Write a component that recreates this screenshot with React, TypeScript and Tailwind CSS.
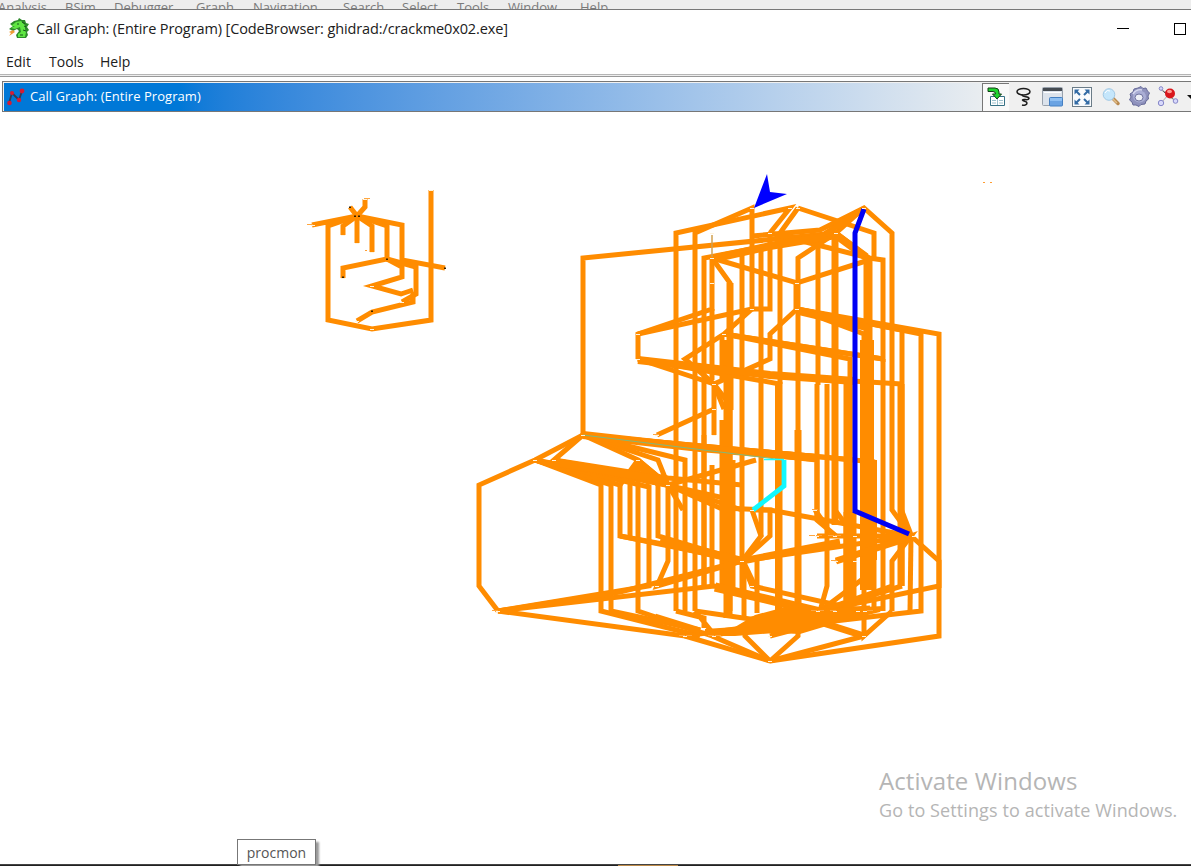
const smallGraph = [
  "M312 225L357 216L328 226V320L372 329L431 320V190",
  "M357 216L343 226V235",
  "M357 216V243",
  "M357 216L372 226V252",
  "M357 216L387 226V259L343 268V278",
  "M357 216L402 225V260L445 268",
  "M350 207L357 216L365 207V199",
  "M387 259L402 267V277L372 286L401 294L413 290",
  "M387 259L416 267V294L402 302",
  "M413 292V302L372 312L357 321",
];

const upperEdges = [
  "M583 435V258L836 233",
  "M676 611V233L790 208L770 233",
  "M695 611V233L752 208V309L638 334",
  "M704 586V258L836 233L864 208",
  "M712 258V309L638 334V359",
  "M712 258L836 233L869 258",
  "M712 258L797 283L869 260",
  "M712 258L730 283V611",
  "M770 233V309L752 309L724 334L685 359L714 384V435",
  "M798 208L780 233V384",
  "M798 208L874 233V258",
  "M752 236L820 230L864 208L892 233V510L911 536",
  "M770 233L869 258L883 260V359L724 334",
  "M798 283V258L836 233",
  "M797 309L770 334V359L714 384L730 405",
  "M797 309L864 334V611",
  "M797 309L902 330V586",
  "M797 309L921 334V611L800 625",
  "M797 309L939 334V586L820 611",
  "M638 359L714 384L724 409",
  "M638 359L780 384V611",
  "M638 359L770 376L835 380L902 384",
  "M724 334L883 359",
  "M724 334L850 359V611",
  "M742 252V590",
  "M761 245V536",
  "M722 334V380",
  "M712 309V380",
  "M657 435L714 409",
];

const lowerEdges = [
  "M583 435L535 460L479 485V586L498 611",
  "M583 435L554 460L668 485",
  "M583 435L638 460L668 485V561L657 586L742 561",
  "M583 435L658 460L668 485",
  "M583 435L685 460V611",
  "M583 435L855 460",
  "M583 435L817 460V520",
  "M583 435L875 462",
  "M535 460L601 485V611L700 636",
  "M535 460L611 485V611L700 630",
  "M535 460L620 485V536L742 561",
  "M535 460L649 487V586L498 611",
  "M535 460L668 485L742 510",
  "M554 460L668 478L742 485",
  "M554 460L733 500",
  "M638 460L630 485V536",
  "M638 460V611L712 636L770 661",
  "M638 460L658 485V536L742 561",
  "M638 460L620 485M638 460L649 485M638 460L668 485",
  "M668 485L683 510",
  "M668 485L756 460",
  "M668 485L720 508L770 510L911 536",
  "M704 435V586M712 465V586M722 420V586",
  "M498 611L714 586L820 611",
  "M498 611L620 592L742 561L911 536",
  "M498 611L685 636L864 611",
  "M742 561L668 545L620 536",
  "M742 561L752 586L864 611",
  "M742 561L770 536V510L752 510L761 536L742 561",
  "M744 561V616",
  "M757 561V613",
  "M836 561L911 536L892 561V611",
  "M817 536L911 536L939 561V636L770 661",
  "M911 536L910 611",
  "M827 384V586L820 611L864 578",
  "M817 384V520L836 536",
  "M815 510L825 524M835 510L850 530",
  "M902 586L820 611",
  "M676 611L704 618V628M695 611L712 632",
  "M695 611L750 619L820 611L870 608",
  "M685 636L770 661L864 636",
  "M770 636L864 611",
  "M770 661L745 636V628",
  "M770 661L798 636V625",
  "M864 611V636L892 611",
  "M712 636L820 611L892 586",
];

const nodes = [
  [752, 208], [790, 208], [798, 208], [864, 208], [712, 233], [770, 233],
  [836, 233], [712, 258], [712, 283], [797, 283], [752, 309], [797, 309],
  [638, 334], [724, 334], [638, 359], [714, 384], [714, 409], [657, 435],
  [714, 435], [583, 435], [535, 460], [554, 460], [638, 460], [668, 485],
  [752, 510], [815, 510], [817, 536], [835, 536], [855, 536], [914, 536],
  [742, 561], [836, 561], [855, 561], [657, 586], [752, 586], [498, 611],
  [818, 611], [835, 611], [858, 611], [865, 611], [685, 636], [714, 636],
  [770, 636], [864, 636], [770, 661], [313, 225], [365, 199], [343, 235],
  [357, 243], [372, 252], [431, 190], [343, 278], [372, 286], [402, 302],
  [357, 321], [372, 329],
];

const ticks = [
  [656, 434], [812, 535], [819, 535], [831, 535], [838, 535], [815, 509],
  [834, 560], [814, 610], [821, 610], [833, 610], [870, 610], [495, 610],
  [682, 635], [689, 635], [711, 635], [718, 635], [310, 224], [367, 198],
];

const darkNodes = [[350, 207], [355, 216], [359, 216], [387, 259], [445, 268], [372, 311], [343, 277]];

function CallGraph() {
  return (
    <svg className="block h-[752px] w-full" viewBox="0 112 1191 752">
      <g fill="none" stroke="#ff8c00" strokeWidth="5" strokeLinejoin="miter">
        {smallGraph.concat(upperEdges, lowerEdges).map((d, i) => (
          <path key={i} d={d} />
        ))}
        <path d="M797 283V309" strokeWidth="7" />
        <path d="M798 309V430" />
        <path d="M798 430V620" strokeWidth="7" />
        <path d="M730 283V410" strokeWidth="7" />
        <path d="M728 340V618" strokeWidth="9" />
        <path d="M733 460V590" />
        <path d="M835 235V525" strokeWidth="7" />
        <path d="M818 236V385" />
        <path d="M868 258V400" strokeWidth="9" />
        <path d="M867 340V590" strokeWidth="14" />
        <path d="M871 460V560" strokeWidth="12" />
        <path d="M848 384V611" strokeWidth="9" />
        <path d="M850 512V600" strokeWidth="13" />
        <path d="M778.5 384V620" strokeWidth="7" />
        <path d="M901 384V586" strokeWidth="7" />
        <path d="M901 510L911 536" strokeWidth="6" />
        <path d="M883 359V611M874 540V611" />
        <path d="M797 311L869 328" strokeWidth="7" />
        <path d="M638 360L770 375L855 381" strokeWidth="8" />
        <path d="M583 435L700 448L817 458" strokeWidth="8" />
        <path d="M554 462L668 481" strokeWidth="8" />
        <path d="M712 259L770 246L836 235" strokeWidth="8" />
        <path d="M836 235L866 257" strokeWidth="8" />
        <path d="M825 234L862 210" strokeWidth="6" />
        <path d="M660 541L742 561" strokeWidth="8" />
        <path d="M715 587L820 612" strokeWidth="9" />
        <path d="M655 617L700 631" strokeWidth="7" />
        <path d="M820 622L864 636" strokeWidth="7" />
        <path d="M836 561L911 537" strokeWidth="7" />
        <path d="M742 561L840 542" strokeWidth="7" />
        <path d="M742 561L754 586" strokeWidth="7" />
      </g>
      <path d="M705 636V629L735 627L755 615L800 603L820 609L884 606L880 612L840 622L800 634L775 633L735 636Z" fill="#ff8c00" />
      <path d="M712 235V257" stroke="#d0a050" strokeWidth="1.5" />
      <path d="M583 435L784 460" fill="none" stroke="#82b878" strokeWidth="1.2" />
      <path d="M764 459.5H784" stroke="#19ffff" strokeWidth="1.5" />
      <path d="M784 460V486L753 510" fill="none" stroke="#10f8ff" strokeWidth="4.8" />
      <path d="M864 209L855 233V511L909 534" fill="none" stroke="#0000f4" strokeWidth="5" />
      <path d="M754 208L767 174L770 192L787 194Z" fill="#0000ff" />
      <g stroke="#fff4df" strokeWidth="1">
        {nodes.map(([x, y]) => (
          <path key={`${x}-${y}`} d={`M${x - 2} ${y + 0.5}h4`} />
        ))}
      </g>
      <g stroke="#ffa640" strokeWidth="1">
        {ticks.map(([x, y]) => (
          <path key={`${x}-${y}`} d={`M${x - 3} ${y + 0.5}h6`} />
        ))}
      </g>
      <g fill="#352000">
        {darkNodes.map(([x, y]) => (
          <rect key={`${x}-${y}`} x={x - 1} y={y - 0.5} width="2" height="1.5" />
        ))}
      </g>
      <path d="M983 182.5h2M990 182.5h2M365 250.5h2" stroke="#ff9d32" />
    </svg>
  );
}

function Dragon() {
  return (
    <svg className="h-[22px] w-[22px]" viewBox="0 0 22 22">
      <path d="M2 6L6 3L10 2L11 0L14 2H17L18 5L21 6L19 9L21 12L19 14L20 17L18 20H9L8 17L11 13L9 11L5 13L1 11L5 8Z" fill="#2d8a2b" />
      <path d="M3 8L8 4L13 3L17 7L17 11L18 14L17 19H10L10 16L13 14L12 9L7 11L3 10L7 8Z" fill="#5ee642" />
      <path d="M9 6h2M14 4l3 2M16 8l2 1M15 12l3 1M12 17h3" stroke="#15551c" strokeWidth="1" />
      <path d="M5 12L1 14L3 15L1 18L7 14Z" fill="#ef9c38" />
    </svg>
  );
}

function GraphIcon() {
  return (
    <svg className="h-[18px] w-[18px]" viewBox="0 0 18 18">
      <path d="M2 15L5 5L12 12L15 3" fill="none" stroke="#333a57" strokeWidth="1.8" />
      <g fill="#d51c35">
        <circle cx="2.5" cy="15" r="2.3" /><circle cx="5" cy="5" r="2.1" />
        <circle cx="12" cy="12" r="2.2" /><circle cx="15" cy="3" r="2.4" />
      </g>
    </svg>
  );
}

function Toolbar() {
  return (
    <div className="flex h-[28px] w-[209px] shrink-0 items-center bg-[#f0f0f0]">
      <div className="flex h-[28px] w-[27px] items-center justify-center border-l border-t border-[#777] bg-[#f9f9f9]">
        <svg className="h-5 w-5" viewBox="0 0 20 20">
          <path d="M4.5 9.5H18.5V18.5H4.5Z" fill="#fff" stroke="#377286" />
          <path d="M11.5 12V18M6 13.500h4M6 16h4M13 13.500h4M13 16h4" stroke="#9bc0cd" />
          <path d="M2 1H9Q13 1 13 5V7H15.500L11 12L6.500 7H9.500Q9.500 4.500 7 4.500H2Z" fill="#20d52f" stroke="#123e17" />
        </svg>
      </div>
      <div className="flex w-[29px] justify-center">
        <svg className="h-5 w-5" viewBox="0 0 20 20" fill="none" stroke="#1d1d1d" strokeWidth="1.5">
          <ellipse cx="9.500" cy="4.700" rx="6.500" ry="3.200" />
          <path d="M8 7.500C8 11 15 8.500 15 11.500C14.500 14 9 11.500 8.500 13C9 14.500 13 14 13 16C13 18 10 18.500 8 18" />
        </svg>
      </div>
      <div className="flex w-[29px] justify-center">
        <svg className="h-[20px] w-[21px]" viewBox="0 0 21 20">
          <rect x=".5" y=".5" width="20" height="18" rx="1" fill="#dce3ec" stroke="#98a1ac" />
          <path d="M1 1H20V4H1Z" fill="#454b52" />
          <path d="M2 5H19V6H2Z" fill="#fff" />
          <rect x="7.500" y="10.500" width="13" height="8.500" rx="1" fill="#6aa3e3" stroke="#4580c3" />
          <path d="M8 11H20V14H8Z" fill="#8fc0f3" />
        </svg>
      </div>
      <div className="flex w-[29px] justify-center">
        <svg className="h-[20px] w-[20px]" viewBox="0 0 20 20">
          <rect x=".5" y=".5" width="19" height="19" fill="#f9fbfd" stroke="#6b7c88" />
          <path d="M4 4L8 8M16 4L12 8M4 16L8 12M16 16L12 12" stroke="#326ba5" strokeWidth="2" />
          <path d="M2.500 2.500H7.500L2.500 7.500ZM17.500 2.500V7.500L12.500 2.500ZM2.500 17.500V12.500L7.500 17.500ZM17.500 17.500H12.500L17.500 12.500Z" fill="#326ba5" />
        </svg>
      </div>
      <div className="flex w-[29px] justify-center">
        <svg className="h-5 w-5" viewBox="0 0 20 20">
          <path d="M12 11.500L17 16.500" stroke="#b98a50" strokeWidth="3.500" strokeLinecap="round" />
          <path d="M11 11L16 16" stroke="#e3c08b" strokeWidth="1.500" />
          <circle cx="8" cy="7.500" r="5.800" fill="#c5e6fb" stroke="#a0c8e5" />
          <path d="M4 6Q6 2 9 4" fill="none" stroke="#fff" />
        </svg>
      </div>
      <div className="flex w-[29px] justify-center">
        <svg className="h-[21px] w-[21px]" viewBox="0 0 21 21">
          <path d="M9 2L12 .5L14 2.500L17 2L18.500 5L20.500 7L19 10L19.500 13L17 15L16 18L12 18.500L10 20.500L7 19L4 19L3 16L.5 14L2 11L1 8L4 6L5 3Z" fill="#8f92bd" stroke="#666a98" />
          <ellipse cx="10.500" cy="10.500" rx="6.500" ry="6" fill="#aaaed5" />
          <ellipse cx="10" cy="11.500" rx="4" ry="3.500" fill="#eef0f7" stroke="#6f739f" />
          <path d="M4 8Q7 3 13 4" fill="none" stroke="#d5d8ef" strokeWidth="1.500" />
        </svg>
      </div>
      <div className="flex w-[28px] justify-center">
        <svg className="h-[21px] w-[22px]" viewBox="0 0 22 21">
          <path d="M3 3L12 8L18 15M12 8L4 17" stroke="#aaa" />
          <circle cx="13" cy="7.500" r="5" fill="#d9171d" />
          <ellipse cx="12.500" cy="5.500" rx="2.500" ry="1.700" fill="#ff9b91" />
          <g fill="#d8d9fb" stroke="#8687c9">
            <circle cx="4" cy="2.500" r="1.800" /><circle cx="4" cy="17" r="2.700" /><circle cx="18.500" cy="15" r="2.300" />
          </g>
        </svg>
      </div>
      <svg className="h-2 w-[9px] shrink-0" viewBox="0 0 9 8"><path d="M5 2H13L9 6Z" fill="#111" /></svg>
    </div>
  );
}

export default function App() {
  return (
    <div className="relative flex h-[866px] w-[1191px] flex-col overflow-hidden bg-white font-['Open_Sans','Noto_Sans',sans-serif] text-[#202020]">
      <div className="h-[10px] shrink-0 overflow-hidden border-b border-[#777] bg-[#ededed]">
        <div className="-ml-[2px] flex text-[13px] leading-[15px] text-[#7b7b7b]">
          <span className="w-[67px]">Analysis</span><span className="w-[49px]">BSim</span>
          <span className="w-[82px]">Debugger</span><span className="w-[57px]">Graph</span>
          <span className="w-[90px]">Navigation</span><span className="w-[59px]">Search</span>
          <span className="w-[55px]">Select</span><span className="w-[51px]">Tools</span>
          <span className="w-[72px]">Window</span><span>Help</span>
        </div>
      </div>
      <header className="flex h-[37px] shrink-0 items-center pl-[8px]">
        <Dragon />
        <h1 className="ml-[6px] whitespace-nowrap text-[14.5px] tracking-[-0.11px]">Call Graph: (Entire Program) [CodeBrowser: ghidrad:/crackme0x02.exe]</h1>
        <div className="ml-auto flex items-center gap-[45px]">
          <div className="h-px w-[12px] bg-black" />
          <div className="mr-[5px] h-[12px] w-[12px] border border-black" />
        </div>
      </header>
      <nav className="flex h-[27px] shrink-0 items-center pt-[2px] text-[14px]">
        <span className="ml-[6px] w-[43px]">Edit</span><span className="w-[51px]">Tools</span><span>Help</span>
      </nav>
      <div className="h-[3px] shrink-0 border-y border-t-[#b5b5b5] border-b-[#999] bg-[#eee]" />
      <div className="h-[4px] shrink-0" />
      <div className="ml-[2px] flex h-[31px] shrink-0 items-center border border-r-0 border-[#777] bg-[#f0f0f0] pl-px">
        <div className="flex h-[28px] flex-1 items-center bg-linear-to-r from-[#0078d7] from-18% to-[#e9edf0] to-100% pl-[3px]">
          <GraphIcon />
          <span className="ml-[5px] whitespace-nowrap pt-px text-[13px] tracking-[0.05px] text-white">Call Graph: (Entire Program)</span>
        </div>
        <Toolbar />
      </div>
      <main className="h-[752px] shrink-0"><CallGraph /></main>
      <footer className="flex h-[2px] shrink-0 border-t border-[#444] bg-[#222]">
        <div className="ml-[618px] h-px w-[60px] bg-[#bd8a48]" />
      </footer>
      <aside className="absolute left-[879px] top-[767px] whitespace-nowrap text-[#b5b5b5]">
        <div className="text-[24px] leading-[28px] tracking-[0.1px]">Activate Windows</div>
        <div className="text-[18px] leading-[30px] tracking-[0.1px]">Go to Settings to activate Windows.</div>
      </aside>
      <div className="absolute left-[237px] top-[839px] flex h-[26px] w-[79px] items-center justify-center border border-[#777] bg-white text-[14px] text-[#555] shadow-[3px_3px_2px_#999]">procmon</div>
    </div>
  );
}
